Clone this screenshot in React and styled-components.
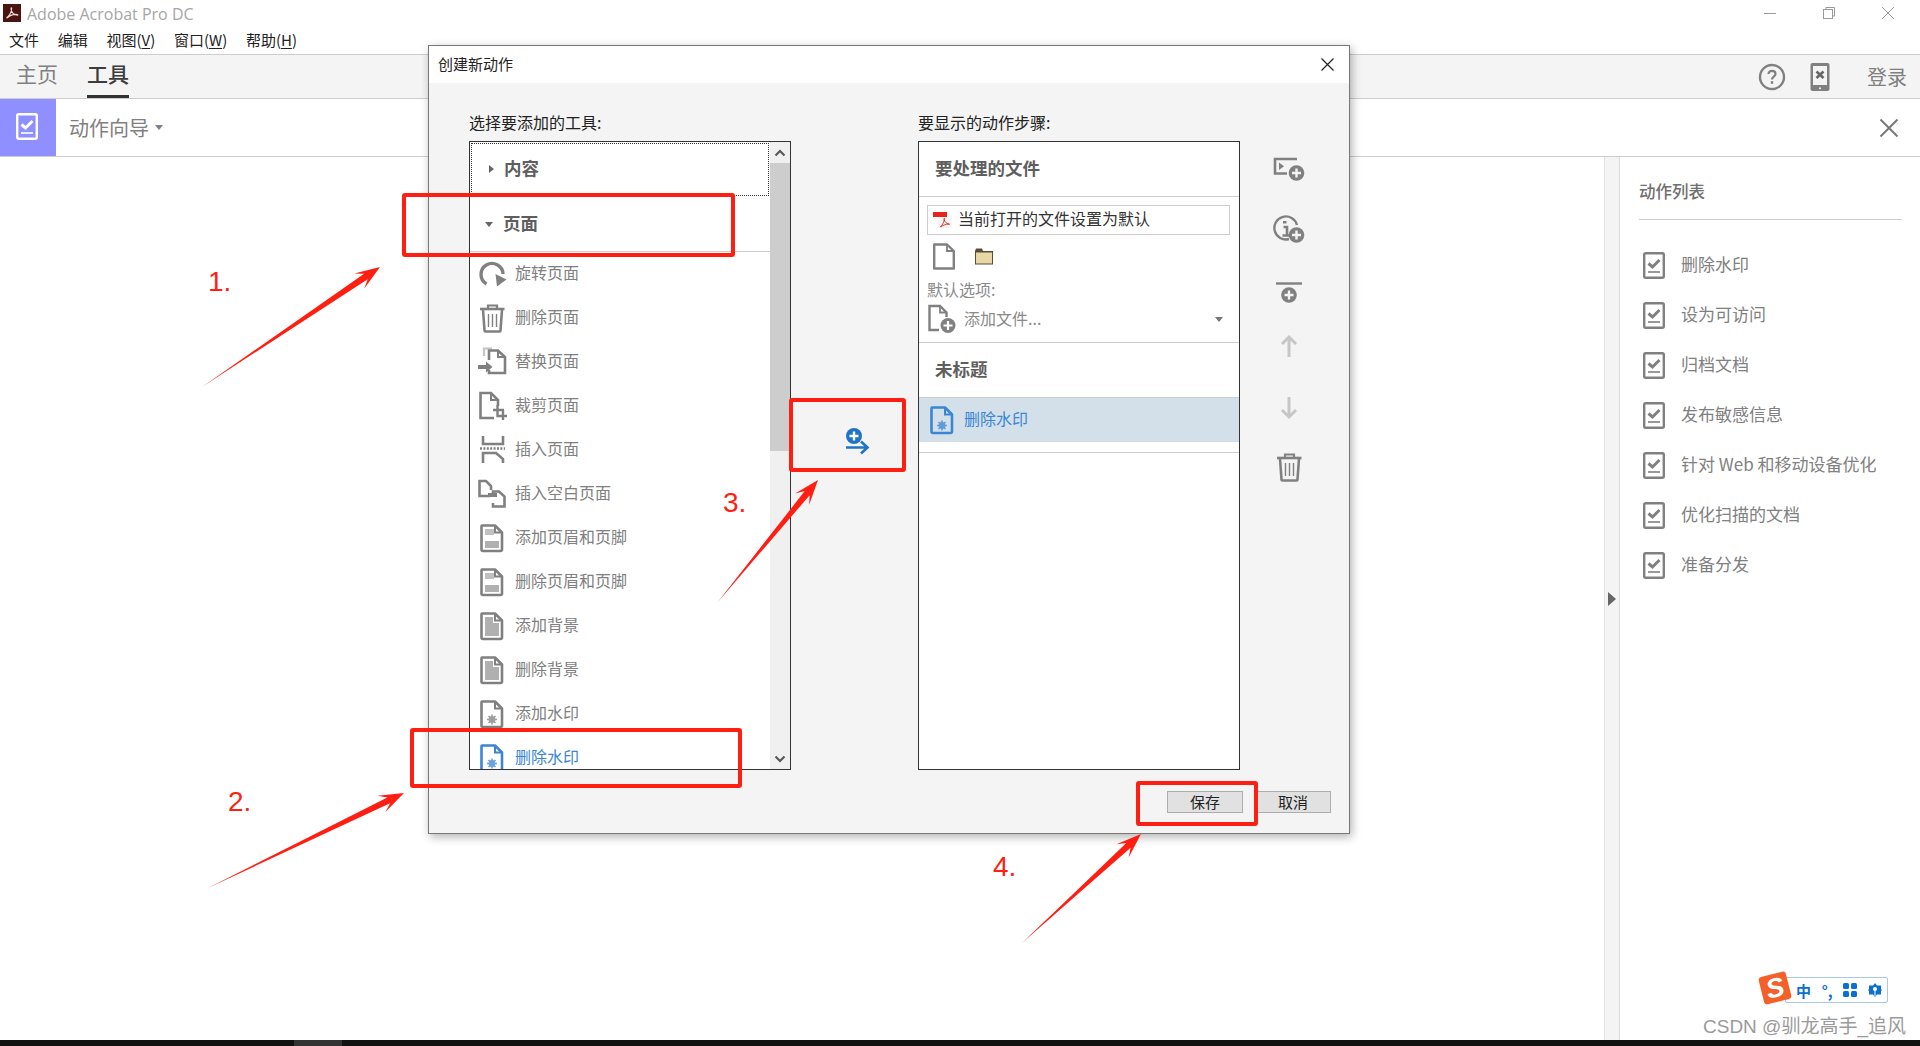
import React from "react";
import styled, { createGlobalStyle } from "styled-components";

const arrowPoints = (x1, y1, x2, y2) => {
  const len = Math.hypot(x2 - x1, y2 - y1);
  const ux = (x2 - x1) / len;
  const uy = (y2 - y1) / len;
  const nx = -uy;
  const ny = ux;
  const at = (back, side) =>
    `${x2 - ux * back + nx * side},${y2 - uy * back + ny * side}`;
  return [
    `${x1},${y1}`,
    at(17, 3.2),
    at(25, 9),
    `${x2},${y2}`,
    at(25, -9),
    at(17, -3.2)
  ].join(" ");
};

const Doc = ({ children, color = "#808080" }) => (
  <svg width="30" height="30" viewBox="0 0 30 30" fill="none" style={{ color }}>
    <path
      d="M5 2.5H18L25 9.5V26.5C25 27.3 24.5 28 23.5 28H6C5 28 4.5 27.3 4.5 26.5V3.5C4.5 3 4.7 2.5 5 2.5Z"
      stroke="currentColor"
      strokeWidth="2.6"
      strokeLinejoin="round"
    />
    <path d="M18 2.5V9.5H25" stroke="currentColor" strokeWidth="2" />
    {children}
  </svg>
);

const Gear = ({ cx = 15, cy = 20.5 }) => (
  <g fill="currentColor" opacity="0.75">
    <circle cx={cx} cy={cy} r="3.4" />
    <path
      d={`M${cx} ${cy - 5}V${cy + 5}M${cx - 5} ${cy}H${cx + 5}M${cx - 3.5} ${cy - 3.5}L${cx + 3.5} ${cy + 3.5}M${cx + 3.5} ${cy - 3.5}L${cx - 3.5} ${cy + 3.5}`}
      stroke="currentColor"
      strokeWidth="1.6"
    />
  </g>
);

const RotateIcon = () => (
  <svg width="30" height="30" viewBox="0 0 30 30" fill="none">
    <path d="M9.5 25A11 11 0 1 1 26 15" stroke="#808080" strokeWidth="3.4" />
    <path d="M18.5 15L29.5 20.5L20 27.5Z" fill="#808080" />
  </svg>
);

const TrashIcon = ({ color = "#808080" }) => (
  <svg width="30" height="30" viewBox="0 0 30 30" fill="none" stroke={color}>
    <path d="M3 6H27.5" strokeWidth="2.6" />
    <path d="M11 5.5V2.5H20V5.5" strokeWidth="2.2" />
    <path d="M6 6.5L7.5 27.5C7.5 28 8 28.5 8.5 28.5H22.5C23 28.5 23.5 28 23.5 27.5L25 6.5" strokeWidth="2.6" />
    <path d="M11.5 11V24M15.5 11V24M19.5 11V24" strokeWidth="1.4" />
  </svg>
);

const ReplaceIcon = () => (
  <svg width="30" height="30" viewBox="0 0 30 30" fill="none">
    <path d="M7 9V1.5H15" stroke="#c4c4c4" strokeWidth="2.2" />
    <path d="M12 13V3.5H21L28 10V26H12V23" stroke="#808080" strokeWidth="2.6" />
    <path d="M21 3.5V10H28" stroke="#808080" strokeWidth="2" />
    <path d="M1 18H9V14.5L15.5 20L9 25.5V22H1Z" fill="#808080" />
  </svg>
);

const CropIcon = () => (
  <svg width="30" height="30" viewBox="0 0 30 30" fill="none" stroke="#808080">
    <path d="M17 27H3.5V2H14L21 9V15" strokeWidth="2.6" />
    <path d="M14 2V9H21" strokeWidth="2" />
    <path d="M16 19H27M20.5 14V25H30M26 19V29" strokeWidth="2.4" />
  </svg>
);

const InsertIcon = () => (
  <svg width="30" height="30" viewBox="0 0 30 30" fill="none" stroke="#808080">
    <path d="M6 1V9H26V1" strokeWidth="2.6" />
    <path d="M3 13.5H28" strokeWidth="2.6" strokeDasharray="2 1.4" />
    <path d="M6 28V18H19L26 24V28" strokeWidth="2.6" />
  </svg>
);

const InsertBlankIcon = () => (
  <svg width="30" height="30" viewBox="0 0 30 30" fill="none" stroke="#808080">
    <path d="M13 17H2.5V2H9L14 7V11" strokeWidth="2.6" />
    <path d="M16 17V12.5H22L27.5 17.5V27.5H16V24" strokeWidth="2.6" />
    <path d="M11 16H20" strokeWidth="4" />
  </svg>
);

const HeaderFooterIcon = () => (
  <Doc>
    <rect x="8" y="6" width="9" height="6" fill="#c0c0c0" />
    <rect x="8" y="18" width="14" height="7" fill="#b0b0b0" />
  </Doc>
);

const BackgroundIcon = () => (
  <Doc>
    <path d="M8 6H16V12H22V25H8Z" fill="#b0b0b0" />
  </Doc>
);

const WatermarkIcon = ({ color }) => (
  <Doc color={color}>
    <Gear />
  </Doc>
);

const CheckDoc = ({ color = "#808080", width = 22, height = 27 }) => (
  <svg width={width} height={height} viewBox="0 0 22 27" fill="none" stroke={color}>
    <rect x="1.2" y="1.2" width="19.6" height="24.6" rx="1.5" strokeWidth="2.4" />
    <path d="M5.5 11.5L9.5 15L16.5 8" strokeWidth="3" />
    <path d="M5 20H17" strokeWidth="1.6" />
  </svg>
);

const AcrobatGlyph = ({ color, size }) => (
  <svg width={size} height={size} viewBox="0 0 20 20" fill="none" stroke={color}>
    <path
      d="M2 17C5 16 9 10 9.5 4C9.7 2 8.5 2 8.7 4.5C9 9 13 13 18 13C19 13 18 12 16 12C11 12 6 14 3 17.5"
      strokeWidth="1.6"
    />
  </svg>
);

const DocPlus = () => (
  <svg width="30" height="30" viewBox="0 0 30 30" fill="none">
    <path d="M12 26H2.5V2H13L19.5 8.5V13" stroke="#808080" strokeWidth="2.4" />
    <path d="M13 2V8.5H19.5" stroke="#808080" strokeWidth="1.8" />
    <circle cx="21" cy="21.5" r="7.5" fill="#808080" />
    <path d="M16.5 21.5H25.5M21 17V26" stroke="#fff" strokeWidth="2.2" />
  </svg>
);

const AcrobatMark = () => (
  <path
    d="M7 16C9 15 11 11 11.5 8C11.6 7 11 7 11 8.5C11.5 11 14 13 17 13.3M8 16C10 14 13 13 16 13"
    stroke="#e8231a"
    strokeWidth="0.9"
  />
);

const PdfFile = () => (
  <svg width="20" height="18" viewBox="0 0 20 18" fill="none">
    <path d="M5 1H15L19 5V17H5Z" fill="#f5f5f5" />
    <rect x="0" y="1" width="14" height="5" fill="#e8231a" />
    <AcrobatMark />
  </svg>
);

const Folder = () => (
  <svg width="18" height="17" viewBox="0 0 18 17">
    <path d="M0 3V16.5H18V3H8L7 0.5H1Z" fill="#5d4a36" />
    <rect x="1" y="4.5" width="16" height="11" fill="#e9d8a6" />
  </svg>
);

const BlankDoc = () => (
  <svg width="22" height="27" viewBox="0 0 22 27" fill="none" stroke="#808080">
    <path d="M1.2 1.5H14L20.8 8V25.5H1.2Z" strokeWidth="2.4" strokeLinejoin="round" />
    <path d="M14 1.5V8H20.8" strokeWidth="1.8" />
  </svg>
);

const AddPanelIcon = () => (
  <svg width="32" height="30" viewBox="0 0 32 30" fill="none">
    <path d="M24 5H2V19.5H14" stroke="#808080" strokeWidth="2.6" />
    <path d="M6 8.5V16L11 12.2Z" fill="#808080" />
    <circle cx="23.5" cy="19" r="7.8" fill="#808080" />
    <path d="M19 19H28M23.5 14.5V23.5" stroke="#f4f4f4" strokeWidth="2.4" />
  </svg>
);

const AddInfoIcon = () => (
  <svg width="32" height="30" viewBox="0 0 32 30" fill="none">
    <path d="M16 25A11.5 11.5 0 1 1 24 11" stroke="#808080" strokeWidth="2.4" />
    <path d="M10 8.2H13.5M10.5 13H14V21.5M9.5 21.5H17" stroke="#808080" strokeWidth="2.6" />
    <circle cx="23.5" cy="21" r="7.8" fill="#808080" />
    <path d="M19 21H28M23.5 16.5V25.5" stroke="#f4f4f4" strokeWidth="2.4" />
  </svg>
);

const AddStepIcon = () => (
  <svg width="30" height="30" viewBox="0 0 30 30" fill="none">
    <path d="M2 6.5H28" stroke="#808080" strokeWidth="2.4" />
    <circle cx="15" cy="18" r="7.8" fill="#808080" />
    <path d="M10.5 18H19.5M15 13.5V22.5" stroke="#f4f4f4" strokeWidth="2.4" />
  </svg>
);

const ArrowIcon = ({ up }) => (
  <svg width="30" height="30" viewBox="0 0 30 30" fill="none" stroke="#c6c6c6" strokeWidth="3">
    {up ? (
      <path d="M15 26V6M8 13L15 6L22 13" />
    ) : (
      <path d="M15 4V24M8 17L15 24L22 17" />
    )}
  </svg>
);

const MoveRightIcon = () => (
  <svg width="26" height="28" viewBox="0 0 26 28" fill="none">
    <circle cx="9" cy="8" r="8" fill="#1f74c4" />
    <path d="M4.5 8H13.5M9 3.5V12.5" stroke="#fff" strokeWidth="2.4" />
    <path d="M1 19.5H22M16 13.5L22.5 19.5L16 25.5" stroke="#1f74c4" strokeWidth="2.6" />
  </svg>
);

const Chevron = ({ down }) => (
  <svg width="12" height="8" viewBox="0 0 12 8" fill="none" stroke="#555" strokeWidth="2">
    <path d={down ? "M1.5 1.5L6 6L10.5 1.5" : "M1.5 6.5L6 2L10.5 6.5"} />
  </svg>
);

const tools = [
  { label: "旋转页面", Icon: RotateIcon },
  { label: "删除页面", Icon: TrashIcon },
  { label: "替换页面", Icon: ReplaceIcon },
  { label: "裁剪页面", Icon: CropIcon },
  { label: "插入页面", Icon: InsertIcon },
  { label: "插入空白页面", Icon: InsertBlankIcon },
  { label: "添加页眉和页脚", Icon: HeaderFooterIcon },
  { label: "删除页眉和页脚", Icon: HeaderFooterIcon },
  { label: "添加背景", Icon: BackgroundIcon },
  { label: "删除背景", Icon: BackgroundIcon },
  { label: "添加水印", Icon: WatermarkIcon },
  { label: "删除水印", Icon: WatermarkIcon, active: true }
];

const actions = [
  "删除水印",
  "设为可访问",
  "归档文档",
  "发布敏感信息",
  "针对 Web 和移动设备优化",
  "优化扫描的文档",
  "准备分发"
];

const annotationBoxes = [
  { x: 402, y: 193, w: 333, h: 64 },
  { x: 410, y: 728, w: 332, h: 60 },
  { x: 789, y: 398, w: 117, h: 74 },
  { x: 1136, y: 781, w: 122, h: 45 }
];

const annotationNumbers = [
  { x: 208, y: 268, text: "1." },
  { x: 228, y: 788, text: "2." },
  { x: 723, y: 489, text: "3." },
  { x: 993, y: 853, text: "4." }
];

const annotationArrows = [
  [202, 387, 380, 267],
  [208, 888, 404, 793],
  [717, 603, 818, 480],
  [1022, 943, 1141, 834]
];

const App = () => (
  <Page>
    <GlobalStyle />
    <TitleBar>
      <AppLogo>
        <AcrobatGlyph color="#f3d9d6" size={14} />
      </AppLogo>
      <AppTitle>Adobe Acrobat Pro DC</AppTitle>
      <WindowControls>
        <svg width="14" height="14" viewBox="0 0 14 14" stroke="#999">
          <path d="M1 7.5H13" />
        </svg>
        <svg width="14" height="14" viewBox="0 0 14 14" fill="none" stroke="#999">
          <rect x="1.5" y="3.5" width="9" height="9" />
          <path d="M4 3.5V1.5H12.5V10H10.5" />
        </svg>
        <svg width="14" height="14" viewBox="0 0 14 14" stroke="#999">
          <path d="M1 1L13 13M13 1L1 13" />
        </svg>
      </WindowControls>
    </TitleBar>
    <MenuBar>
      <MenuItem>文件</MenuItem>
      <MenuItem>编辑</MenuItem>
      <MenuItem>视图(<u>V</u>)</MenuItem>
      <MenuItem>窗口(<u>W</u>)</MenuItem>
      <MenuItem>帮助(<u>H</u>)</MenuItem>
    </MenuBar>
    <TabBar>
      <Tab>主页</Tab>
      <Tab $active>工具</Tab>
      <TabActions>
        <svg width="28" height="28" viewBox="0 0 28 28" fill="none">
          <circle cx="14" cy="14" r="12" stroke="#808080" strokeWidth="2.4" />
          <path d="M10.5 11C10.5 6.8 17.5 7 17.5 11C17.5 13.8 14 13.6 14 16.5" stroke="#808080" strokeWidth="2.2" />
          <rect x="12.8" y="18.2" width="2.4" height="2.6" fill="#808080" />
        </svg>
        <svg width="20" height="28" viewBox="0 0 20 28">
          <rect x="0.5" y="0" width="19" height="28" rx="2" fill="#808080" />
          <rect x="3" y="3" width="14" height="19" fill="#f4f4f4" />
          <path d="M6.5 8.5L13.5 15M13.5 8.5L6.5 15" stroke="#666" strokeWidth="2.6" />
          <rect x="9" y="24.5" width="2" height="1.6" fill="#f4f4f4" />
        </svg>
        <LoginText>登录</LoginText>
      </TabActions>
    </TabBar>
    <ToolRow>
      <ToolBadge>
        <CheckDoc color="#ffffff" />
      </ToolBadge>
      <ToolName>动作向导</ToolName>
      <SmallCaret />
      <ToolClose>
        <svg width="20" height="20" viewBox="0 0 20 20" stroke="#777" strokeWidth="2">
          <path d="M1.5 1.5L18.5 18.5M18.5 1.5L1.5 18.5" />
        </svg>
      </ToolClose>
    </ToolRow>
    <Workspace>
      <MainArea />
      <PanelStrip>
        <StripArrow />
      </PanelStrip>
      <ActionPanel>
        <PanelHeading>动作列表</PanelHeading>
        <ActionList>
          {actions.map(action => (
            <ActionRow key={action}>
              <CheckDoc />
              <RowText>{action}</RowText>
            </ActionRow>
          ))}
        </ActionList>
      </ActionPanel>
    </Workspace>
    <BottomBar>
      <BottomTab />
    </BottomBar>

    <Dialog>
      <DialogTitle>
        <RowText>创建新动作</RowText>
        <svg width="13" height="13" viewBox="0 0 13 13" stroke="#222" strokeWidth="1.2">
          <path d="M0.5 0.5L12.5 12.5M12.5 0.5L0.5 12.5" />
        </svg>
      </DialogTitle>
      <DialogBody>
        <Columns>
          <Column>
            <ColumnLabel>选择要添加的工具:</ColumnLabel>
            <ListBox>
              <ToolList>
                <FocusRow>
                  <RightCaret />
                  <GroupLabel>内容</GroupLabel>
                </FocusRow>
                <GroupRow>
                  <DownCaret />
                  <GroupLabel>页面</GroupLabel>
                </GroupRow>
                {tools.map(({ label, Icon, active }) => (
                  <ToolItem key={label} $active={active}>
                    <IconSlot>
                      <Icon color={active ? "#3a86d4" : undefined} />
                    </IconSlot>
                    <ToolText>{label}</ToolText>
                  </ToolItem>
                ))}
              </ToolList>
              <ScrollTrack>
                <ScrollEnd>
                  <Chevron />
                </ScrollEnd>
                <ScrollThumb />
                <ScrollRest />
                <ScrollEnd>
                  <Chevron down />
                </ScrollEnd>
              </ScrollTrack>
            </ListBox>
          </Column>
          <MoveColumn>
            <MoveRightIcon />
          </MoveColumn>
          <Column>
            <ColumnLabel>要显示的动作步骤:</ColumnLabel>
            <StepBox>
              <StepHeader>要处理的文件</StepHeader>
              <FileSection>
                <FileField>
                  <PdfFile />
                  <ToolText>当前打开的文件设置为默认</ToolText>
                </FileField>
                <FileIcons>
                  <BlankDoc />
                  <Folder />
                </FileIcons>
                <OptionLabel>默认选项:</OptionLabel>
                <OptionRow>
                  <DocPlus />
                  <OptionText>添加文件...</OptionText>
                  <OptionCaret />
                </OptionRow>
              </FileSection>
              <StepHeader>未标题</StepHeader>
              <StepSelected>
                <WatermarkIcon color="#3a86d4" />
                <ToolText>删除水印</ToolText>
              </StepSelected>
              <StepSpacer />
            </StepBox>
          </Column>
          <SideTools>
            <SideButton $top={13}><AddPanelIcon /></SideButton>
            <SideButton $top={30}><AddInfoIcon /></SideButton>
            <SideButton $top={33}><AddStepIcon /></SideButton>
            <SideButton $top={24}><ArrowIcon up /></SideButton>
            <SideButton $top={32}><ArrowIcon /></SideButton>
            <SideButton $top={29}><TrashIcon /></SideButton>
          </SideTools>
        </Columns>
        <DialogFooter>
          <FooterButton>保存</FooterButton>
          <FooterButton>取消</FooterButton>
        </DialogFooter>
      </DialogBody>
    </Dialog>

    {annotationBoxes.map(box => (
      <RedBox key={box.x} $x={box.x} $y={box.y} $w={box.w} $h={box.h} />
    ))}
    {annotationNumbers.map(n => (
      <RedNumber key={n.text} $x={n.x} $y={n.y}>
        {n.text}
      </RedNumber>
    ))}
    <ArrowLayer width="1920" height="1046">
      {annotationArrows.map(a => (
        <polygon key={a[0]} points={arrowPoints(...a)} fill="#fe1f12" />
      ))}
    </ArrowLayer>

    <ImeBar>
      <ImeLogo>S</ImeLogo>
      <ImeGlyph>中</ImeGlyph>
      <ImeGlyph>°,</ImeGlyph>
      <svg width="14" height="14" viewBox="0 0 14 14" fill="#0a6fd0">
        <rect x="0" y="0" width="6" height="6" rx="1.5" />
        <rect x="8" y="0" width="6" height="6" rx="1.5" />
        <rect x="0" y="8" width="6" height="6" rx="1.5" />
        <rect x="8" y="8" width="6" height="6" rx="1.5" />
      </svg>
      <svg width="14" height="14" viewBox="0 0 14 14">
        <path d="M7 0L9 2.5H13V6L14 7L13 8V11.5H9L7 14L5 11.5H1V8L0 7L1 6V2.5H5Z" fill="#0a6fd0" />
        <circle cx="7" cy="6" r="2" fill="#fff" />
        <path d="M7 7.5V13" stroke="#fff" />
      </svg>
    </ImeBar>
    <Watermark>CSDN @驯龙高手_追风</Watermark>
  </Page>
);

// ------------------------------- Styled Components --------------------------------------------

const GlobalStyle = createGlobalStyle`
  html, body {
    margin: 0;
    padding: 0;
    background: #fff;
  }
  body {
    font-family: "Noto Sans CJK SC", "Open Sans", sans-serif;
    overflow: hidden;
  }
  u {
    text-underline-offset: 2px;
  }
`;

const Page = styled.div`
  position: relative;
  width: 1920px;
  height: 1046px;
  display: flex;
  flex-direction: column;
  overflow: hidden;
  background: #fff;
`;

const TitleBar = styled.div`
  height: 26px;
  display: flex;
  align-items: center;
  padding-left: 3px;
`;

const AppLogo = styled.div`
  width: 18px;
  height: 18px;
  background: #4a1410;
  display: flex;
  align-items: center;
  justify-content: center;
`;

const AppTitle = styled.span`
  margin: 2px 0 0 6px;
  font: 16px "Open Sans", sans-serif;
  color: #a6a6a6;
`;

const WindowControls = styled.div`
  margin-left: auto;
  display: flex;
  gap: 45px;
  padding-right: 25px;
`;

const MenuBar = styled.div`
  height: 28px;
  display: flex;
  align-items: center;
  gap: 18.7px;
  padding-left: 9px;
  border-bottom: 1px solid #cdcdcd;
`;

const MenuItem = styled.span`
  font-size: 15px;
  line-height: 28px;
  color: #222;
`;

const TabBar = styled.div`
  height: 43px;
  display: flex;
  gap: 29px;
  padding-left: 16px;
  background: #f4f4f4;
  border-bottom: 1px solid #cdcdcd;
`;

const Tab = styled.div`
  height: 43px;
  box-sizing: border-box;
  font-size: 21px;
  font-weight: ${p => (p.$active ? 500 : 400)};
  line-height: 36px;
  color: ${p => (p.$active ? "#3c3c3c" : "#808080")};
  border-bottom: 3px solid ${p => (p.$active ? "#333" : "transparent")};
`;

const TabActions = styled.div`
  margin-left: auto;
  display: flex;
  align-items: center;
  padding-right: 13px;
  svg:first-child {
    margin-right: 24px;
  }
`;

const LoginText = styled.span`
  margin-left: 37px;
  font-size: 20px;
  color: #808080;
`;

const ToolRow = styled.div`
  height: 57px;
  display: flex;
  align-items: center;
  border-bottom: 1px solid #cdcdcd;
`;

const ToolBadge = styled.div`
  width: 56px;
  height: 57px;
  box-sizing: border-box;
  padding: 0 3px 2px 0;
  background: #8f8fff;
  display: flex;
  align-items: center;
  justify-content: center;
`;

const ToolName = styled.span`
  margin-left: 13px;
  font-size: 20px;
  color: #808080;
`;

const SmallCaret = styled.i`
  margin-left: 6px;
  border-style: solid;
  border-width: 5px 4px 0;
  border-color: #808080 transparent transparent;
`;

const ToolClose = styled.div`
  margin-left: auto;
  padding-right: 21px;
  display: flex;
`;

const Workspace = styled.div`
  flex: 1;
  display: flex;
  min-height: 0;
`;

const MainArea = styled.div`
  flex: 1;
`;

const PanelStrip = styled.div`
  width: 14px;
  background: #f4f4f4;
  border-left: 1px solid #e4e4e4;
  border-right: 1px solid #dcdcdc;
  display: flex;
  align-items: center;
  justify-content: center;
`;

const StripArrow = styled.i`
  border-style: solid;
  border-width: 7px 0 7px 8px;
  border-color: transparent transparent transparent #666;
`;

const ActionPanel = styled.div`
  width: 300px;
  box-sizing: border-box;
  padding: 23px 0 0 19px;
`;

const PanelHeading = styled.div`
  width: 263px;
  padding-bottom: 17px;
  border-bottom: 1px solid #cdcdcd;
  font-size: 16.5px;
  font-weight: 500;
  line-height: 22px;
  color: #707070;
`;

const ActionList = styled.div`
  margin-top: 20px;
`;

const ActionRow = styled.div`
  height: 50px;
  display: flex;
  align-items: center;
  gap: 16px;
  padding-left: 4px;
  font-size: 17px;
  color: #808080;
`;

const RowText = styled.span`
  padding-bottom: 3px;
`;

const ToolText = styled.span`
  padding-bottom: 5px;
`;

const BottomBar = styled.div`
  height: 6px;
  background: #111;
  padding-left: 294px;
`;

const BottomTab = styled.div`
  width: 48px;
  height: 6px;
  background: #333;
`;

const Dialog = styled.div`
  position: absolute;
  left: 428px;
  top: 45px;
  width: 922px;
  height: 789px;
  box-sizing: border-box;
  display: flex;
  flex-direction: column;
  background: #f4f4f4;
  border: 1px solid #777;
  box-shadow: 2px 3px 9px rgba(0, 0, 0, 0.3);
`;

const DialogTitle = styled.div`
  height: 37px;
  flex: none;
  display: flex;
  align-items: center;
  justify-content: space-between;
  padding: 0 15px 0 9px;
  background: #fff;
  font-size: 15px;
  color: #222;
`;

const DialogBody = styled.div`
  flex: 1;
  padding: 28px 18px 0 40px;
`;

const Columns = styled.div`
  display: grid;
  grid-template-columns: 322px 127px 322px 1fr;
`;

const Column = styled.div`
  display: flex;
  flex-direction: column;
`;

const ColumnLabel = styled.div`
  height: 22px;
  margin-bottom: 8px;
  font-size: 16px;
  line-height: 22px;
  color: #222;
`;

const ListBox = styled.div`
  height: 629px;
  box-sizing: border-box;
  display: flex;
  overflow: hidden;
  background: #fff;
  border: 1px solid #333;
`;

const ToolList = styled.div`
  flex: 1;
  overflow: hidden;
`;

const FocusRow = styled.div`
  height: 53px;
  margin: 1px;
  box-sizing: border-box;
  display: flex;
  align-items: center;
  padding: 0 0 2px 17px;
  border: 1px dotted #333;
`;

const GroupRow = styled.div`
  height: 55px;
  box-sizing: border-box;
  display: flex;
  align-items: center;
  padding-left: 15px;
  border-bottom: 1px solid #cdcdcd;
`;

const GroupLabel = styled.span`
  padding-bottom: 3px;
  font-size: 17.5px;
  font-weight: 700;
  color: #5e5e5e;
`;

const RightCaret = styled.i`
  margin-right: 10px;
  border-style: solid;
  border-width: 4px 0 4px 5px;
  border-color: transparent transparent transparent #666;
`;

const DownCaret = styled.i`
  margin-right: 10px;
  border-style: solid;
  border-width: 5px 4px 0;
  border-color: #666 transparent transparent;
`;

const ToolItem = styled.div`
  height: 44px;
  display: flex;
  align-items: center;
  gap: 8px;
  padding-left: 7px;
  font-size: 16px;
  white-space: nowrap;
  color: ${p => (p.$active ? "#3a86d4" : "#808080")};
`;

const IconSlot = styled.div`
  width: 30px;
  height: 30px;
  flex: none;
`;

const ScrollTrack = styled.div`
  width: 20px;
  flex: none;
  display: flex;
  flex-direction: column;
  background: #f0f0f0;
`;

const ScrollEnd = styled.div`
  height: 21px;
  flex: none;
  display: flex;
  align-items: center;
  justify-content: center;
`;

const ScrollThumb = styled.div`
  height: 288px;
  flex: none;
  background: #cdcdcd;
`;

const ScrollRest = styled.div`
  flex: 1;
`;

const MoveColumn = styled.div`
  display: flex;
  align-items: flex-start;
  padding: 317px 0 0 54px;
`;

const StepBox = styled.div`
  height: 629px;
  box-sizing: border-box;
  background: #fff;
  border: 1px solid #333;
`;

const StepHeader = styled.div`
  height: 54px;
  padding-left: 16px;
  font-size: 17.5px;
  font-weight: 700;
  line-height: 52px;
  color: #5e5e5e;
`;

const FileSection = styled.div`
  padding: 8px 9px 6px 8px;
  border-top: 1px solid #cdcdcd;
  border-bottom: 1px solid #cdcdcd;
`;

const FileField = styled.div`
  height: 30px;
  box-sizing: border-box;
  display: flex;
  align-items: center;
  gap: 5px;
  padding-left: 5px;
  border: 1px solid #cdcdcd;
  font-size: 16px;
  color: #333;
`;

const FileIcons = styled.div`
  display: flex;
  align-items: center;
  gap: 20px;
  height: 26px;
  margin-top: 8px;
  padding-left: 6px;
`;

const OptionLabel = styled.div`
  margin: 9px 0 2px;
  font-size: 16px;
  line-height: 22px;
  color: #8a8a8a;
`;

const OptionRow = styled.div`
  height: 34px;
  display: flex;
  align-items: center;
  gap: 7px;
`;

const OptionText = styled.span`
  flex: 1;
  padding-bottom: 3px;
  font-size: 16px;
  color: #8a8a8a;
`;

const OptionCaret = styled.i`
  margin-right: 7px;
  border-style: solid;
  border-width: 5px 4px 0;
  border-color: #777 transparent transparent;
`;

const StepSelected = styled.div`
  height: 45px;
  box-sizing: border-box;
  display: flex;
  align-items: center;
  gap: 7px;
  padding-left: 8px;
  border-top: 1px solid #cdcdcd;
  background: #d3e0ea;
  font-size: 16px;
  color: #3a86d4;
`;

const StepSpacer = styled.div`
  height: 10px;
  border-bottom: 1px solid #cdcdcd;
`;

const SideTools = styled.div`
  display: flex;
  flex-direction: column;
  align-items: center;
  width: 98px;
  padding-top: 30px;
`;

const SideButton = styled.div`
  height: 30px;
  margin-top: ${p => p.$top}px;
`;

const DialogFooter = styled.div`
  display: flex;
  justify-content: flex-end;
  gap: 12px;
  margin-top: 21px;
`;

const FooterButton = styled.button`
  width: 76px;
  height: 22px;
  padding: 0;
  box-sizing: border-box;
  background: #e1e1e1;
  border: 1px solid #adadad;
  font-family: inherit;
  font-size: 15px;
  line-height: 18px;
  color: #222;
`;

const RedBox = styled.div`
  position: absolute;
  left: ${p => p.$x}px;
  top: ${p => p.$y}px;
  width: ${p => p.$w}px;
  height: ${p => p.$h}px;
  box-sizing: border-box;
  border: 4px solid #fe1f12;
  border-radius: 3px;
`;

const RedNumber = styled.div`
  position: absolute;
  left: ${p => p.$x}px;
  top: ${p => p.$y}px;
  font: 28px/28px "Liberation Sans", sans-serif;
  color: #fe1f12;
`;

const ArrowLayer = styled.svg`
  position: absolute;
  left: 0;
  top: 0;
  pointer-events: none;
`;

const ImeBar = styled.div`
  position: absolute;
  left: 1785px;
  top: 977px;
  width: 103px;
  height: 26px;
  box-sizing: border-box;
  display: flex;
  align-items: center;
  justify-content: space-between;
  padding: 0 5px 0 10px;
  background: #fff;
  border: 1px solid #a9c8e6;
  border-radius: 2px;
`;

const ImeLogo = styled.div`
  position: absolute;
  left: -25px;
  top: -4px;
  width: 28px;
  height: 28px;
  border-radius: 3px;
  background: #f4602a;
  transform: rotate(-14deg);
  font: italic 700 27px/28px "Liberation Sans", sans-serif;
  text-align: center;
  color: #fff;
`;

const ImeGlyph = styled.span`
  font-size: 15px;
  font-weight: 700;
  color: #0a6fd0;
`;

const Watermark = styled.div`
  position: absolute;
  left: 1703px;
  top: 1013px;
  font: 19px/28px "Liberation Sans", "Noto Sans CJK SC", sans-serif;
  color: #9a9a9a;
  white-space: nowrap;
`;

export default App;
